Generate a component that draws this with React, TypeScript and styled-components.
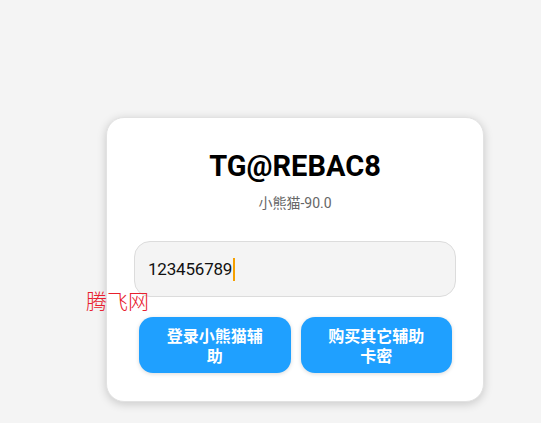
import React from "react";
import styled, { createGlobalStyle } from "styled-components";

const Global = createGlobalStyle`
  html, body { margin: 0; padding: 0; background: #f4f4f4; }
  body { font-family: Roboto, "Noto Sans CJK SC", sans-serif; }
`;

const Page = styled.div`
  position: relative;
  width: 541px;
  height: 423px;
  padding: 117px 0 0 106px;
  box-sizing: border-box;
`;

const Card = styled.div`
  width: 378px;
  height: 285px;
  box-sizing: border-box;
  background: #fff;
  border: 1px solid #e2e2e2;
  border-radius: 18px;
  box-shadow: 0 2px 10px rgba(0, 0, 0, 0.18);
  padding: 30px 27px 0;
  display: flex;
  flex-direction: column;
  align-items: stretch;
`;

const Title = styled.h1`
  margin: 0;
  font-family: Roboto, sans-serif;
  font-weight: 700;
  font-size: 29px;
  line-height: 36px;
  text-align: center;
  color: #000;
`;

const Subtitle = styled.div`
  margin-top: 10px;
  font-size: 14px;
  line-height: 18px;
  text-align: center;
  color: #666;
  font-family: Roboto, "Noto Sans CJK SC", sans-serif;
`;

const Field = styled.div`
  margin-top: 29px;
  height: 56px;
  box-sizing: border-box;
  background: #f4f4f4;
  border: 1px solid #dcdcdc;
  border-radius: 16px;
  padding: 0 13px;
  display: flex;
  align-items: center;
  font-size: 17px;
  letter-spacing: -0.2px;
  color: #111;
  font-family: Roboto, sans-serif;
`;

const Caret = styled.span`
  display: inline-block;
  width: 2px;
  height: 23px;
  background: #f5a000;
  margin-left: 1px;
`;

const Buttons = styled.div`
  margin: 20px 4px 0 5px;
  display: grid;
  grid-template-columns: 1fr 1fr;
  gap: 10px;
`;

const Button = styled.button`
  height: 56px;
  border: none;
  border-radius: 14px;
  background: #1fa0ff;
  color: #fff;
  font-family: "Noto Sans CJK SC", sans-serif;
  font-weight: 700;
  font-size: 16px;
  line-height: 20px;
  padding: 0 22px;
  box-shadow: 0 1px 4px rgba(0, 0, 0, 0.15);
`;

const Watermark = styled.div`
  position: absolute;
  left: 86px;
  top: 287px;
  font-family: "Noto Sans CJK SC", serif;
  font-weight: 300;
  font-size: 21px;
  line-height: 26px;
  color: #e8202e;
`;

export default function App() {
  return (
    <>
      <Global />
      <Page>
        <Card>
          <Title>TG@REBAC8</Title>
          <Subtitle>小熊猫-90.0</Subtitle>
          <Field>
            123456789
            <Caret />
          </Field>
          <Buttons>
            <Button>登录小熊猫辅助</Button>
            <Button>购买其它辅助卡密</Button>
          </Buttons>
        </Card>
        <Watermark>腾飞网</Watermark>
      </Page>
    </>
  );
}
